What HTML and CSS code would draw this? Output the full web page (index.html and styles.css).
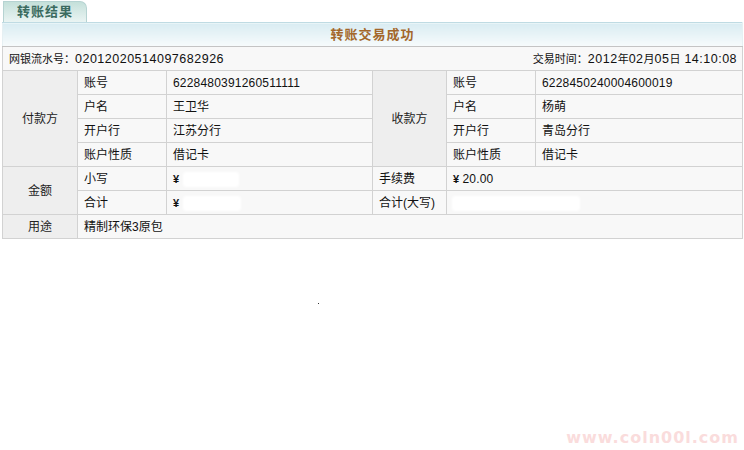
FILE: index.html
```html
<!DOCTYPE html>
<html lang="zh-CN">
<head>
<meta charset="utf-8">
<title>转账结果</title>
<link rel="stylesheet" href="styles.css">
</head>
<body>
<div class="page">
  <div class="tabbar"><div class="tab">转账结果</div></div>
  <table class="result">
    <colgroup>
      <col class="c1"><col class="c2"><col class="c3"><col class="c4"><col class="c5"><col class="c6">
    </colgroup>
    <tr class="title-row"><td colspan="6">转账交易成功</td></tr>
    <tr class="info-row">
      <td colspan="6">
        <div class="info">
          <span>网银流水号：<span class="num">02012020514097682926</span></span>
          <span>交易时间：<span class="num">2012</span>年<span class="num">02</span>月<span class="num">05</span>日<span class="num"> 14:10:08</span></span>
        </div>
      </td>
    </tr>
    <tr>
      <td class="group" rowspan="4">付款方</td>
      <td>账号</td><td class="num">6228480391260511111</td>
      <td class="group" rowspan="4">收款方</td>
      <td>账号</td><td class="num">6228450240004600019</td>
    </tr>
    <tr><td>户名</td><td>王卫华</td><td>户名</td><td>杨萌</td></tr>
    <tr><td>开户行</td><td>江苏分行</td><td>开户行</td><td>青岛分行</td></tr>
    <tr><td>账户性质</td><td>借记卡</td><td>账户性质</td><td>借记卡</td></tr>
    <tr>
      <td class="group" rowspan="2">金额</td>
      <td>小写</td><td><span class="yen">¥</span><span class="mask m1"></span></td>
      <td>手续费</td><td colspan="2"><span class="yen">¥</span> <span class="num">20.00</span></td>
    </tr>
    <tr>
      <td>合计</td><td><span class="yen">¥</span><span class="mask m2"></span></td>
      <td>合计(大写)</td><td colspan="2"><span class="mask m3"></span></td>
    </tr>
    <tr><td class="group">用途</td><td colspan="5">精制环保3原包</td></tr>
  </table>
  <div class="dot"></div>
  <div class="watermark">www.coln00l.com</div>
</div>
</body>
</html>
```
FILE: styles.css
```css
html, body {
  margin: 0;
  padding: 0;
  background: #ffffff;
}
body {
  font-family: "Liberation Sans", "Noto Sans CJK SC", sans-serif;
  font-size: 12px;
  color: #111;
}
.page {
  position: relative;
  width: 744px;
  height: 450px;
  padding-left: 2px;
  box-sizing: border-box;
}
.tabbar {
  height: 22px;
  padding-left: 1px;
  display: flex;
  align-items: flex-end;
}
.tab {
  width: 84px;
  height: 21px;
  box-sizing: border-box;
  border: 1px solid #b6d3d2;
  border-bottom: none;
  border-top-right-radius: 7px;
  background: linear-gradient(#c4e0da, #eaf4f3);
  color: #3b6b5f;
  font-weight: bold;
  font-size: 13px;
  line-height: 20px;
  padding-left: 13px;
  letter-spacing: 1px;
}
.result {
  width: 740px;
  border-collapse: collapse;
  table-layout: fixed;
}
.c1 { width: 75px; }
.c2 { width: 89px; }
.c3 { width: 206px; }
.c4 { width: 74px; }
.c5 { width: 89px; }
.c6 { width: 207px; }
.result td {
  height: 23px;
  padding: 0 0 0 6px;
  border: 1px solid #d2d2d2;
  background: #f8f8f8;
  line-height: 22px;
  white-space: nowrap;
  overflow: hidden;
}
.result td.group {
  background: #eeeeee;
  text-align: center;
  padding: 0;
  color: #222;
}
.title-row td {
  background: linear-gradient(#d9ecf2, #f7fbfc);
  border-top: 1px solid #bfdbe3;
  border-left: 1px solid #e6f0f3;
  border-right: 1px solid #e6f0f3;
  border-bottom: 1px solid #c4c4c4;
  text-align: center;
  color: #a3672b;
  font-weight: bold;
  font-size: 13px;
  letter-spacing: 1px;
  padding: 0;
}
.info-row td {
  padding: 0 5px 0 6px;
  font-size: 11px;
}
.info {
  display: flex;
  justify-content: space-between;
}
.info .num {
  font-size: 12.5px;
  letter-spacing: 0.5px;
}
.num { letter-spacing: 0.2px; }
.yen {
  font-weight: bold;
  font-size: 11px;
}
.mask {
  display: inline-block;
  vertical-align: middle;
  height: 15px;
  background: #ffffff;
  filter: blur(1px);
  border-radius: 3px;
}
.m1 { width: 56px; margin-left: 4px; }
.m2 { width: 58px; margin-left: 4px; }
.m3 { width: 128px; margin-left: -1px; }
.dot {
  position: absolute;
  left: 318px;
  top: 303px;
  width: 1px;
  height: 1px;
  background: #333;
}
.watermark {
  position: absolute;
  right: 5px;
  top: 428px;
  font-family: "DejaVu Sans", sans-serif;
  font-weight: bold;
  font-size: 16px;
  letter-spacing: 1px;
  color: #fadcdc;
}
```
